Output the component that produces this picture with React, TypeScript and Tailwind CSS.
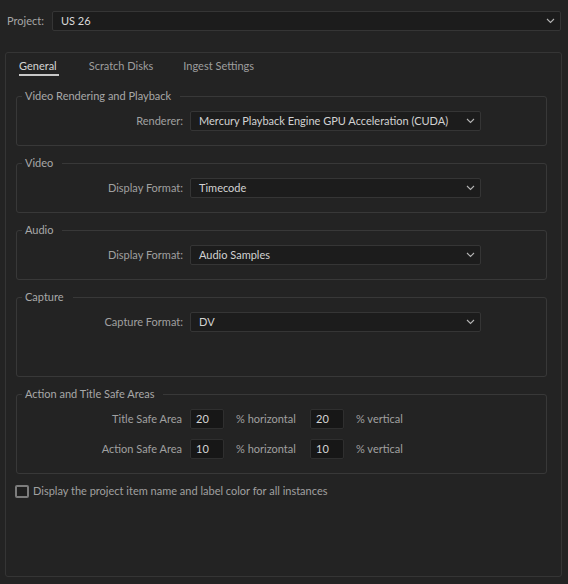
import React from 'react'

function Chevron(): React.JSX.Element {
  return (
    <svg width="9" height="6" viewBox="0 0 9 6" className="shrink-0">
      <polyline points="1,1 4.5,4.5 8,1" fill="none" stroke="#b4b4b4" strokeWidth="1.1" />
    </svg>
  )
}

function Select({ value, className = '' }: { value: string; className?: string }): React.JSX.Element {
  return (
    <div
      className={`flex items-center justify-between h-[20px] pl-[8px] pr-[5px] rounded-[2px] border border-[#353535] bg-[#1c1c1c] text-[#d2d2d2] ${className}`}
    >
      <span className="whitespace-nowrap">{value}</span>
      <Chevron />
    </div>
  )
}

function Group({
  title,
  children,
  tall = false,
}: {
  title: string
  children: React.ReactNode
  tall?: boolean
}): React.JSX.Element {
  return (
    <fieldset
      className={`border border-[#383838] rounded-[3px] ${tall ? 'h-[87px]' : 'h-[57px]'}`}
    >
      <legend className="ml-[5px] pl-[3px] pr-[9px] leading-[14px] text-[#a8a8a8]">{title}</legend>
      {children}
    </fieldset>
  )
}

function SelectRow({ label, value }: { label: string; value: string }): React.JSX.Element {
  return (
    <div className="flex items-center mt-[8px]">
      <span className="w-[166px] text-right text-[#a0a0a0]">{label}</span>
      <Select value={value} className="ml-[7px] w-[291px]" />
    </div>
  )
}

function NumBox({ value }: { value: string }): React.JSX.Element {
  return (
    <div className="w-[34px] h-[20px] pl-[5px] flex items-center rounded-[2px] border border-[#2f2f2f] bg-[#171717] text-[#d6d6d6]">
      {value}
    </div>
  )
}

function SafeRow({ label, h, v }: { label: string; h: string; v: string }): React.JSX.Element {
  return (
    <div className="flex items-center">
      <span className="w-[165px] text-right text-[#a0a0a0]">{label}</span>
      <div className="ml-[8px]">
        <NumBox value={h} />
      </div>
      <span className="ml-[12px] w-[62px] whitespace-nowrap text-[#a0a0a0]">% horizontal</span>
      <div className="ml-[12px]">
        <NumBox value={v} />
      </div>
      <span className="ml-[12px] whitespace-nowrap text-[#a0a0a0]">% vertical</span>
    </div>
  )
}

export default function App(): React.JSX.Element {
  return (
    <div className="w-[568px] h-[584px] bg-[#232323] overflow-hidden font-['Lato','Noto_Sans',sans-serif] text-[11px] leading-[16px] select-none">
      {/* Project */}
      <div className="flex items-center pt-[11px] pl-[7px] pr-[7px]">
        <span className="w-[45px] text-[#a6a6a6]">Project:</span>
        <Select value="US 26" className="flex-1 pr-[4px] text-[#dadada]" />
      </div>

      {/* Preferences panel */}
      <div className="mt-[21px] ml-[5px] mr-[6px] h-[525px] border border-[#353535] rounded-[3px]">
        <div className="flex gap-[30px] pl-[13px] pt-[5px]">
          <div className="pr-[2px] border-b-2 border-[#c8c8c8] text-[#d4d4d4]">General</div>
          <div className="text-[#9e9e9e]">Scratch Disks</div>
          <div className="text-[#9e9e9e]">Ingest Settings</div>
        </div>

        <div className="flex flex-col gap-[10px] mt-[13px] ml-[10px] mr-[14px]">
          <Group title="Video Rendering and Playback">
            <SelectRow label="Renderer:" value="Mercury Playback Engine GPU Acceleration (CUDA)" />
          </Group>
          <Group title="Video">
            <SelectRow label="Display Format:" value="Timecode" />
          </Group>
          <Group title="Audio">
            <SelectRow label="Display Format:" value="Audio Samples" />
          </Group>
          <Group title="Capture" tall>
            <SelectRow label="Capture Format:" value="DV" />
          </Group>
          <Group title="Action and Title Safe Areas" tall>
            <div className="flex flex-col gap-[10px] mt-[8px]">
              <SafeRow label="Title Safe Area" h="20" v="20" />
              <SafeRow label="Action Safe Area" h="10" v="10" />
            </div>
          </Group>
        </div>

        <label className="flex items-center mt-[9px] ml-[9px] text-[#a0a0a0]">
          <span className="w-[14px] h-[13px] rounded-[2px] border-2 border-[#7c7c7c] bg-[#1f1f1f]" />
          <span className="ml-[4px]">Display the project item name and label color for all instances</span>
        </label>
      </div>
    </div>
  )
}
